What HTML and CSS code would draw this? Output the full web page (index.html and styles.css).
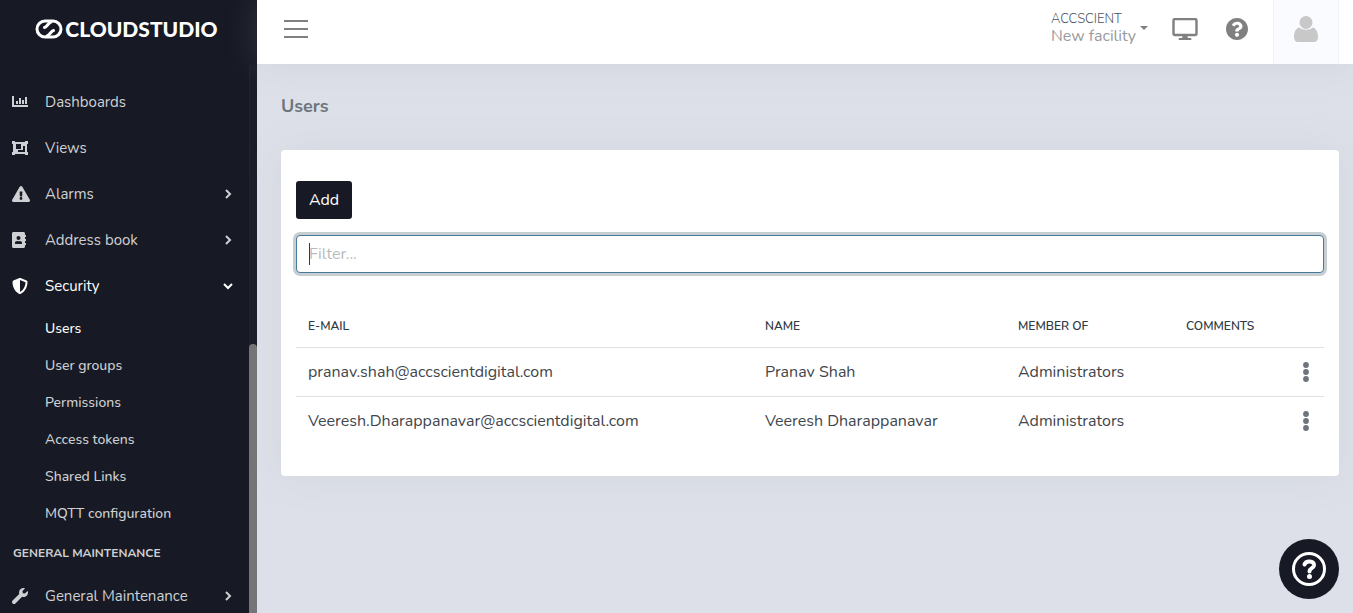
FILE: index.html
```html
<!DOCTYPE html>
<html lang="en">
<head>
    <meta charset="UTF-8">
    <meta name="viewport" content="width=device-width, initial-scale=1.0">
    <title>Users</title>
    <link rel="stylesheet" href="styles.css">
</head>
<body>
    <aside class="sidebar">
        <a href="#" class="logo">
            <svg width="28" height="20" viewBox="0 0 28 20" fill="none" stroke="currentColor" stroke-linecap="round">
                <rect x="2" y="2" width="24" height="16" rx="8" stroke-width="3"/>
                <path stroke-width="3" d="M16 3C13 4 12 8 9.500 8.500M12 17C15 16 16 12 18.500 11.500"/>
            </svg>
            <span>CLOUDSTUDIO</span>
        </a>
        <div class="sidebar-body">
            <nav class="menu">
                <a href="#" class="menu-item">
                    <svg class="menu-icon" viewBox="0 0 16 16" shape-rendering="crispEdges"><path d="M0 2h2v9h14v2H0zM4 7h2v3H4zM7 4h2v6H7zM10 6h2v4h-2zM13 3h2v7h-2z"/></svg>
                    <span>Dashboards</span>
                </a>
                <a href="#" class="menu-item">
                    <svg class="menu-icon" viewBox="0 0 16 16"><path fill-rule="evenodd" d="M0 1h3v1h10V1h3v3h-1v8h1v3h-3v-1H3v1H0v-3h1V4H0zM4 4v5h5V4zM11 6v4H6v2h7V6z"/></svg>
                    <span>Views</span>
                </a>
                <a href="#" class="menu-item">
                    <svg class="menu-icon wide" viewBox="0 0 576 512"><path d="M569.517 440.013C587.975 472.007 564.806 512 527.940 512H48.054c-36.937 0-59.999-40.055-41.577-71.987L246.423 23.985c18.467-32.009 64.720-31.951 83.154 0l239.940 416.028zM288 354c-25.405 0-46 20.595-46 46s20.595 46 46 46 46-20.595 46-46-20.595-46-46-46zm-43.673-165.346l7.418 136c.347 6.364 5.609 11.346 11.982 11.346h48.546c6.373 0 11.635-4.982 11.982-11.346l7.418-136c.375-6.874-5.098-12.654-11.982-12.654h-63.383c-6.884 0-12.356 5.780-11.981 12.654z"/></svg>
                    <span>Alarms</span>
                    <svg class="arrow" viewBox="0 0 10 10"><path d="M3 1l4 4-4 4"/></svg>
                </a>
                <a href="#" class="menu-item">
                    <svg class="menu-icon" viewBox="0 0 512 512"><path d="M436 160c6.600 0 12-5.400 12-12v-40c0-6.600-5.400-12-12-12h-20V48c0-26.500-21.500-48-48-48H48C21.500 0 0 21.500 0 48v416c0 26.500 21.500 48 48 48h320c26.500 0 48-21.500 48-48v-48h20c6.600 0 12-5.400 12-12v-40c0-6.600-5.400-12-12-12h-20v-64h20c6.600 0 12-5.400 12-12v-40c0-6.600-5.400-12-12-12h-20v-64h20zm-228-32c35.300 0 64 28.700 64 64s-28.700 64-64 64-64-28.700-64-64 28.700-64 64-64zm112 236.800c0 10.600-10 19.200-22.400 19.200H118.400C106 384 96 375.400 96 364.800v-19.200c0-31.800 30.100-57.600 67.200-57.600h5c12.300 5.100 25.700 8 39.800 8s27.600-2.900 39.800-8h5c37.100 0 67.200 25.800 67.200 57.600v19.200z"/></svg>
                    <span>Address book</span>
                    <svg class="arrow" viewBox="0 0 10 10"><path d="M3 1l4 4-4 4"/></svg>
                </a>
                <a href="#" class="menu-item active">
                    <svg class="menu-icon" viewBox="0 0 512 512"><path d="M466.500 83.700l-192-80a48.150 48.150 0 0 0-36.900 0l-192 80C27.700 91.100 16 108.600 16 128c0 198.500 114.500 335.700 221.500 380.300 11.800 4.900 25.100 4.900 36.900 0C360.100 472.600 496 349.300 496 128c0-19.400-11.700-36.900-29.500-44.300zM256.100 446.300l-.1-381 175.900 73.300c-3.300 151.400-82.100 261.100-175.800 307.700z"/></svg>
                    <span>Security</span>
                    <svg class="arrow" viewBox="0 0 10 10"><path d="M1 3l4 4 4-4"/></svg>
                </a>
                <ul class="submenu">
                    <li><a href="#" class="active">Users</a></li>
                    <li><a href="#">User groups</a></li>
                    <li><a href="#">Permissions</a></li>
                    <li><a href="#">Access tokens</a></li>
                    <li><a href="#">Shared Links</a></li>
                    <li><a href="#">MQTT configuration</a></li>
                </ul>
                <div class="menu-title">General Maintenance</div>
                <a href="#" class="menu-item">
                    <svg class="menu-icon" viewBox="0 0 512 512"><path d="M507.730 109.100c-2.240-9.030-13.540-12.090-20.120-5.510l-74.360 74.360-67.880-11.310-11.310-67.880 74.360-74.360c6.620-6.620 3.430-17.900-5.660-20.160-47.380-11.740-99.550.91-136.580 37.930-39.640 39.640-50.550 97.100-34.050 147.200L18.740 402.760c-24.990 24.990-24.990 65.510 0 90.500 24.990 24.990 65.510 24.990 90.500 0l213.210-213.210c50.120 16.710 107.470 5.680 147.370-34.220 37.070-37.070 49.700-89.320 37.910-136.730z"/></svg>
                    <span>General Maintenance</span>
                    <svg class="arrow" viewBox="0 0 10 10"><path d="M3 1l4 4-4 4"/></svg>
                </a>
            </nav>
            <div class="scroll-track"><div class="scroll-thumb"></div></div>
        </div>
    </aside>

    <div class="page">
        <header class="topbar">
            <button class="icon-button" aria-label="Toggle menu">
                <svg width="24" height="18" viewBox="0 0 24 18" fill="currentColor"><path d="M0 0h24v2H0zM0 8h24v2H0zM0 16h24v2H0z"/></svg>
            </button>
            <div class="topbar-right">
                <button class="facility">
                    <span class="facility-text">
                        <span class="facility-org">ACCSCIENT</span>
                        <span class="facility-name">New facility</span>
                    </span>
                    <svg width="8" height="4" viewBox="0 0 8 4" fill="currentColor"><path d="M0 0h8L4 4z"/></svg>
                </button>
                <button class="icon-button" aria-label="Display">
                    <svg width="26" height="22" viewBox="0 0 26 22"><rect x="1.500" y="1" width="23" height="16" rx="1.500" fill="none" stroke="currentColor" stroke-width="2.400"/><path fill="currentColor" d="M11 17h4l1 3h2.500a1 1 0 0 1 0 2h-11a1 1 0 0 1 0-2H10z"/></svg>
                </button>
                <button class="icon-button" aria-label="Help">
                    <svg width="22" height="22" viewBox="8 8 496 496" fill="currentColor"><path d="M504 256c0 136.997-111.043 248-248 248S8 392.997 8 256C8 119.083 119.043 8 256 8s248 111.083 248 248zM262.655 90c-54.497 0-89.255 22.957-116.549 63.758-3.536 5.286-2.353 12.415 2.715 16.258l34.699 26.310c5.205 3.947 12.621 3.008 16.665-2.122 17.864-22.658 30.113-35.797 57.303-35.797 20.429 0 45.698 13.148 45.698 32.958 0 14.976-12.363 22.667-32.534 33.976C247.128 238.528 216 254.941 216 296v4c0 6.627 5.373 12 12 12h56c6.627 0 12-5.373 12-12v-1.333c0-28.462 83.186-29.647 83.186-106.667 0-58.002-60.165-102-116.531-102zM256 338c-25.365 0-46 20.635-46 46 0 25.364 20.635 46 46 46s46-20.636 46-46c0-25.365-20.635-46-46-46z"/></svg>
                </button>
                <button class="account" aria-label="Account">
                    <svg width="24" height="26" viewBox="0 0 24 26" fill="currentColor"><circle cx="12" cy="6.500" r="6.500"/><path d="M5.500 11.500C2 12 0 16 0 21c0 3 1.500 5 4 5h16c2.500 0 4-2 4-5 0-5-2-9-5.500-9.500C16.500 14.500 7.500 14.500 5.500 11.500z"/></svg>
                </button>
            </div>
        </header>

        <main class="content">
            <h4 class="page-title">Users</h4>
            <div class="card">
                <button class="btn-add">Add</button>
                <input type="text" class="filter" placeholder="Filter..." aria-label="Filter" autofocus>
                <table class="users">
                    <thead>
                        <tr>
                            <th>E-mail</th>
                            <th class="col-name">Name</th>
                            <th class="col-member">Member of</th>
                            <th class="col-comments">Comments</th>
                            <th class="col-actions"></th>
                        </tr>
                    </thead>
                    <tbody>
                        <tr>
                            <td>pranav.shah@accscientdigital.com</td>
                            <td>Pranav Shah</td>
                            <td>Administrators</td>
                            <td></td>
                            <td><button class="more" aria-label="Actions"><svg width="6" height="20" viewBox="0 0 6 20" fill="currentColor"><circle cx="3" cy="3" r="2.900"/><circle cx="3" cy="10" r="2.900"/><circle cx="3" cy="17" r="2.900"/></svg></button></td>
                        </tr>
                        <tr>
                            <td>Veeresh.Dharappanavar@accscientdigital.com</td>
                            <td>Veeresh Dharappanavar</td>
                            <td>Administrators</td>
                            <td></td>
                            <td><button class="more" aria-label="Actions"><svg width="6" height="20" viewBox="0 0 6 20" fill="currentColor"><circle cx="3" cy="3" r="2.900"/><circle cx="3" cy="10" r="2.900"/><circle cx="3" cy="17" r="2.900"/></svg></button></td>
                        </tr>
                    </tbody>
                </table>
            </div>
        </main>
    </div>

    <button class="help-float" aria-label="Help">
        <svg width="34" height="34" viewBox="0 0 34 34" fill="none" stroke="currentColor"><circle cx="17" cy="17" r="15.500" stroke-width="3"/><path stroke-width="4" stroke-linecap="round" d="M12.500 12.500C14 8 22.500 8.500 22 13.500C21.500 16.500 17.500 16 17.500 19.500"/><circle cx="17.500" cy="24.500" r="2.500" fill="currentColor" stroke="none"/></svg>
    </button>
</body>
</html>
```
FILE: styles.css
```css
* {
    box-sizing: border-box;
}
body {
    margin: 0;
    display: flex;
    height: 100vh;
    overflow: hidden;
    font-family: Nunito, "Open Sans", sans-serif;
    font-size: 16px;
    color: #313a46;
    background-color: #dde0e8;
}
a {
    color: inherit;
    text-decoration: none;
}
button {
    padding: 0;
    border: none;
    background: none;
    font-family: inherit;
    color: inherit;
    cursor: pointer;
}
svg {
    display: block;
    flex-shrink: 0;
}

/* Sidebar */
.sidebar {
    display: flex;
    flex-direction: column;
    flex: 0 0 257px;
    background-color: #171a24;
    color: #cfd0d3;
    font-size: 15px;
    overflow: hidden;
}
.logo {
    display: flex;
    align-items: center;
    justify-content: center;
    gap: 2px;
    flex: 0 0 64px;
    padding: 0 4px 6px 0;
    color: #fff;
    font-family: Lato, sans-serif;
    font-size: 21px;
    font-weight: 900;
    line-height: 20px;
}
.sidebar-body {
    display: flex;
    flex: 1;
    min-height: 0;
}
.menu {
    flex: 1;
    padding-top: 15px;
}
.menu-item {
    display: flex;
    align-items: center;
    height: 46px;
    padding: 0 16px 0 12px;
}
.menu-item span {
    flex: 1;
}
.menu-icon {
    width: 16px;
    height: 16px;
    margin-right: 17px;
    fill: currentColor;
}
.menu-icon.wide {
    width: 18px;
    margin-right: 15px;
}
.arrow {
    width: 10px;
    height: 10px;
    fill: none;
    stroke: currentColor;
    stroke-width: 2;
}
.active {
    color: #fff;
}
.submenu {
    margin: 0;
    padding: 1px 0;
    list-style: none;
    font-size: 14px;
    font-weight: 500;
}
.submenu a {
    display: block;
    padding-left: 45px;
    line-height: 37px;
}
.menu-title {
    padding-left: 13px;
    line-height: 40px;
    font-size: 12px;
    font-weight: 700;
    text-transform: uppercase;
}
.scroll-track {
    display: flex;
    flex-direction: column;
    justify-content: flex-end;
    flex: 0 0 8px;
    border-left: 1px solid #20232e;
    border-radius: 4px 4px 0 0;
    background-color: #1b1e29;
}
.scroll-thumb {
    height: 49%;
    margin-left: -1px;
    border-radius: 4px 4px 0 0;
    background-color: #757577;
}

/* Top bar */
.page {
    display: flex;
    flex-direction: column;
    flex: 1;
    min-width: 0;
}
.topbar {
    display: flex;
    align-items: center;
    justify-content: space-between;
    flex: 0 0 64px;
    padding: 0 14px 0 27px;
    background-color: #fff;
    box-shadow: 0 0 35px rgba(154, 161, 171, 0.2);
}
.topbar-right {
    display: flex;
    align-self: stretch;
}
.icon-button,
.facility {
    padding-bottom: 6px;
    color: #808080;
}
.topbar-right .icon-button {
    margin-left: 24px;
}
.topbar-right .icon-button + .icon-button {
    margin-left: 28px;
}
.facility {
    display: flex;
    align-items: center;
    gap: 4px;
    padding-bottom: 8px;
    text-align: left;
}
.facility-text {
    display: flex;
    flex-direction: column;
}
.facility-org {
    color: #4a5361;
    font-size: 13px;
    font-weight: 300;
    line-height: 17px;
}
.facility-name {
    color: #989a9c;
    font-size: 16px;
    line-height: 17px;
}
.account {
    display: flex;
    justify-content: center;
    width: 66px;
    margin-left: 25px;
    padding-top: 16px;
    border: 1px solid #f1f3fa;
    border-width: 0 1px;
    background-color: #fafbfe;
    color: #c8c8c8;
}

/* Content */
.content {
    flex: 1;
    padding: 0 14px 0 24px;
}
.page-title {
    margin: 0;
    padding-bottom: 2px;
    color: #6c757d;
    font-size: 18px;
    font-weight: 700;
    line-height: 84px;
}
.card {
    padding: 31px 15px;
    border-radius: 4px;
    background-color: #fff;
    box-shadow: 0 0 35px rgba(154, 161, 171, 0.15);
}
.btn-add {
    display: block;
    width: 56px;
    height: 38px;
    border-radius: 3px;
    background-color: #171a24;
    color: #fff;
    font-size: 16px;
}
.filter {
    display: block;
    width: 100%;
    height: 38px;
    margin-top: 16px;
    padding: 0 12px;
    border: 1px solid #dee2e6;
    border-radius: 4px;
    outline: none;
    color: #313a46;
    font-family: inherit;
    font-size: 16px;
}
.filter::placeholder {
    color: #b8bbbe;
}
.filter:focus {
    border-color: #48799b;
    box-shadow: 0 0 0 3px #c6ced2;
    caret-color: transparent;
    background: linear-gradient(#313a46, #313a46) 12px center / 1px 22px no-repeat #fff;
}
.users {
    width: 100%;
    margin-top: 31px;
    border-collapse: collapse;
    table-layout: fixed;
    text-align: left;
}
.users th {
    height: 43px;
    padding: 2px 12px 0;
    font-size: 12px;
    font-weight: 600;
    text-transform: uppercase;
}
.users td {
    height: 49px;
    padding: 0 12px;
    border-top: 1px solid #dee2e6;
    color: #41464c;
}
.col-name {
    width: 253px;
}
.col-member {
    width: 168px;
}
.col-comments {
    width: 114px;
}
.col-actions {
    width: 36px;
}
.more {
    display: flex;
    margin-left: 3px;
    color: #6c757d;
}

/* Floating help */
.help-float {
    position: fixed;
    right: 14px;
    bottom: 14px;
    display: flex;
    align-items: center;
    justify-content: center;
    width: 60px;
    height: 60px;
    border-radius: 50%;
    background-color: #171a24;
    color: #fff;
}
```
